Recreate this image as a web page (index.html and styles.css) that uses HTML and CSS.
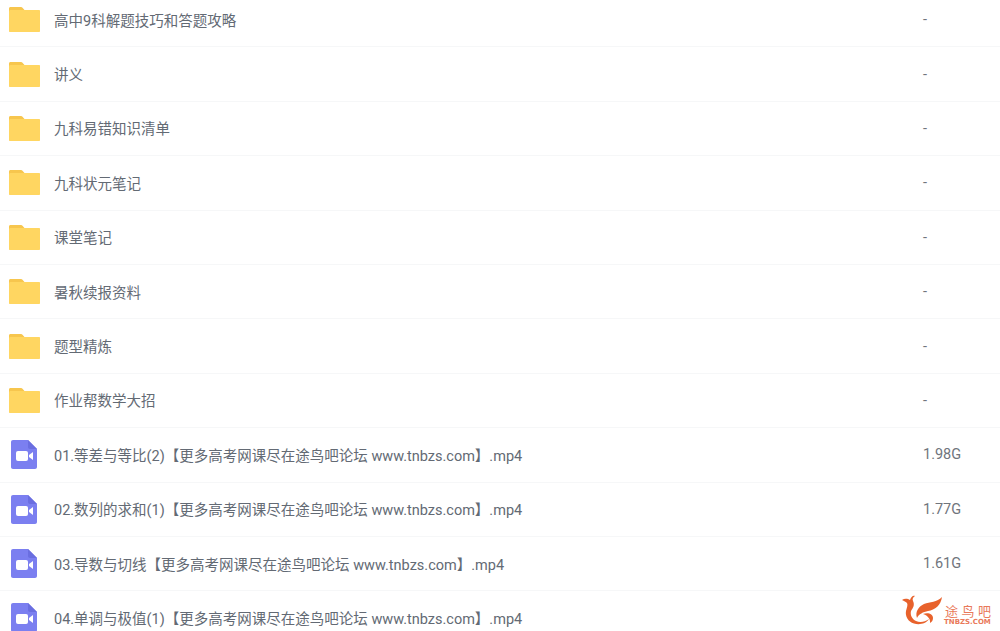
FILE: index.html
```html
<!DOCTYPE html>
<html lang="zh-CN">
<head>
  <meta charset="UTF-8" />
  <title>文件列表</title>
  <link rel="stylesheet" href="styles.css">
</head>
<body>
  <svg class="icon-defs" width="0" height="0">
    <symbol id="folder" viewBox="0 0 31 25">
      <path d="M1.500 0H11.500c1 0 1.600.3 2.200 1L15.500 3H29.500c.9 0 1.500.6 1.500 1.500V23.500c0 .9-.6 1.500-1.500 1.500H1.500C.6 25 0 24.400 0 23.500V1.500C0 .6.600 0 1.500 0z" fill="#f7c64e"/>
      <path d="M0 4.500C0 3.600.600 3 1.500 3H29.500c.9 0 1.500.6 1.500 1.500V23.500c0 .9-.6 1.500-1.500 1.500H1.500C.6 25 0 24.400 0 23.500z" fill="#ffd661"/>
    </symbol>
    <symbol id="video" viewBox="0 0 26 29">
      <path d="M2 0H17L26 9V27c0 1.100-.9 2-2 2H2c-1.100 0-2-.9-2-2V2C0 .9.900 0 2 0z" fill="#7b7ff0"/>
      <path d="M17 0L26 9H19c-1.100 0-2-.9-2-2z" fill="#6a6ee0"/>
      <rect x="5" y="11" width="12" height="10" rx="2" fill="#fff"/>
      <path d="M18 15L22 12V20L18 17z" fill="#fff"/>
    </symbol>
  </svg>

  <ul class="file-list">
    <li class="file-row"><svg class="icon-folder"><use href="#folder"/></svg><span class="file-name">高中9科解题技巧和答题攻略</span><span class="file-size">-</span></li>
    <li class="file-row"><svg class="icon-folder"><use href="#folder"/></svg><span class="file-name">讲义</span><span class="file-size">-</span></li>
    <li class="file-row"><svg class="icon-folder"><use href="#folder"/></svg><span class="file-name">九科易错知识清单</span><span class="file-size">-</span></li>
    <li class="file-row"><svg class="icon-folder"><use href="#folder"/></svg><span class="file-name">九科状元笔记</span><span class="file-size">-</span></li>
    <li class="file-row"><svg class="icon-folder"><use href="#folder"/></svg><span class="file-name">课堂笔记</span><span class="file-size">-</span></li>
    <li class="file-row"><svg class="icon-folder"><use href="#folder"/></svg><span class="file-name">暑秋续报资料</span><span class="file-size">-</span></li>
    <li class="file-row"><svg class="icon-folder"><use href="#folder"/></svg><span class="file-name">题型精炼</span><span class="file-size">-</span></li>
    <li class="file-row"><svg class="icon-folder"><use href="#folder"/></svg><span class="file-name">作业帮数学大招</span><span class="file-size">-</span></li>
    <li class="file-row"><svg class="icon-video"><use href="#video"/></svg><span class="file-name">01.等差与等比(2)【更多高考网课尽在途鸟吧论坛 www.tnbzs.com】.mp4</span><span class="file-size">1.98G</span></li>
    <li class="file-row"><svg class="icon-video"><use href="#video"/></svg><span class="file-name">02.数列的求和(1)【更多高考网课尽在途鸟吧论坛 www.tnbzs.com】.mp4</span><span class="file-size">1.77G</span></li>
    <li class="file-row"><svg class="icon-video"><use href="#video"/></svg><span class="file-name">03.导数与切线【更多高考网课尽在途鸟吧论坛 www.tnbzs.com】.mp4</span><span class="file-size">1.61G</span></li>
    <li class="file-row"><svg class="icon-video"><use href="#video"/></svg><span class="file-name">04.单调与极值(1)【更多高考网课尽在途鸟吧论坛 www.tnbzs.com】.mp4</span><span class="file-size"></span></li>
  </ul>

  <div class="watermark">
    <svg class="watermark-logo" viewBox="0 0 42 30">
      <path d="M0 5C3 3 6 4 8 5C9 2 11 0 13 1C11 2 10 4 11 6C13 10 11 13 9 16C8 20 10 24 14 26C18 28 23 27 27 24C24 29 17 30 12 28.500C6 27 3 21 4 16C5 12 6 10 5 8C4 7 2 6 0 5Z" fill="#e8622c"/>
      <path d="M40 2C39 10 33 15 26 16C21 17 17 19 15 23C13 17 16 12 22 9C28 7 35 7 40 2Z" fill="#e8622c"/>
      <path d="M21 19C26 17 31 19 31 23C31 25 30 27 28 28C28.500 25 27 21 21 19Z" fill="#e8622c"/>
    </svg>
    <div class="watermark-text">
      <span class="watermark-name">途鸟吧</span>
      <span class="watermark-url">TNBZS.COM</span>
    </div>
  </div>
</body>
</html>
```

FILE: styles.css
```css
* {
  margin: 0;
  padding: 0;
  box-sizing: border-box;
}

html,
body {
  height: 631px;
  overflow: hidden;
}

body {
  background-color: #fff;
  font-family: Roboto, "Noto Sans CJK SC", sans-serif;
  color: #636a74;
  position: relative;
}

.icon-defs {
  position: absolute;
}

.file-list {
  list-style: none;
  margin-top: -7px;
}

.file-row {
  display: flex;
  align-items: center;
  height: 54.4px;
  border-bottom: 1px solid #f6f7f8;
  font-size: 14.5px;
}

.icon-folder {
  width: 31px;
  height: 25px;
  margin-left: 9px;
  flex-shrink: 0;
}

.icon-video {
  width: 26px;
  height: 29px;
  margin-left: 11px;
  margin-right: 3px;
  flex-shrink: 0;
}

.file-name {
  margin-left: 14px;
  padding-bottom: 1px;
  flex: 1;
  white-space: nowrap;
}

.file-size {
  width: 77px;
  flex-shrink: 0;
  color: #70757c;
}

.watermark {
  position: absolute;
  left: 902px;
  top: 595px;
  display: flex;
  align-items: flex-start;
}

.watermark-logo {
  width: 42px;
  height: 30px;
  flex-shrink: 0;
}

.watermark-text {
  display: flex;
  flex-direction: column;
  margin-top: 8px;
  color: #e9795a;
}

.watermark-name {
  font-family: "Noto Sans CJK SC", sans-serif;
  font-size: 13px;
  line-height: 16px;
  letter-spacing: 3.5px;
  padding-left: 1px;
  white-space: nowrap;
}

.watermark-url {
  font-family: "DejaVu Sans", sans-serif;
  font-size: 7px;
  font-weight: 700;
  line-height: 7px;
  white-space: nowrap;
}
```
